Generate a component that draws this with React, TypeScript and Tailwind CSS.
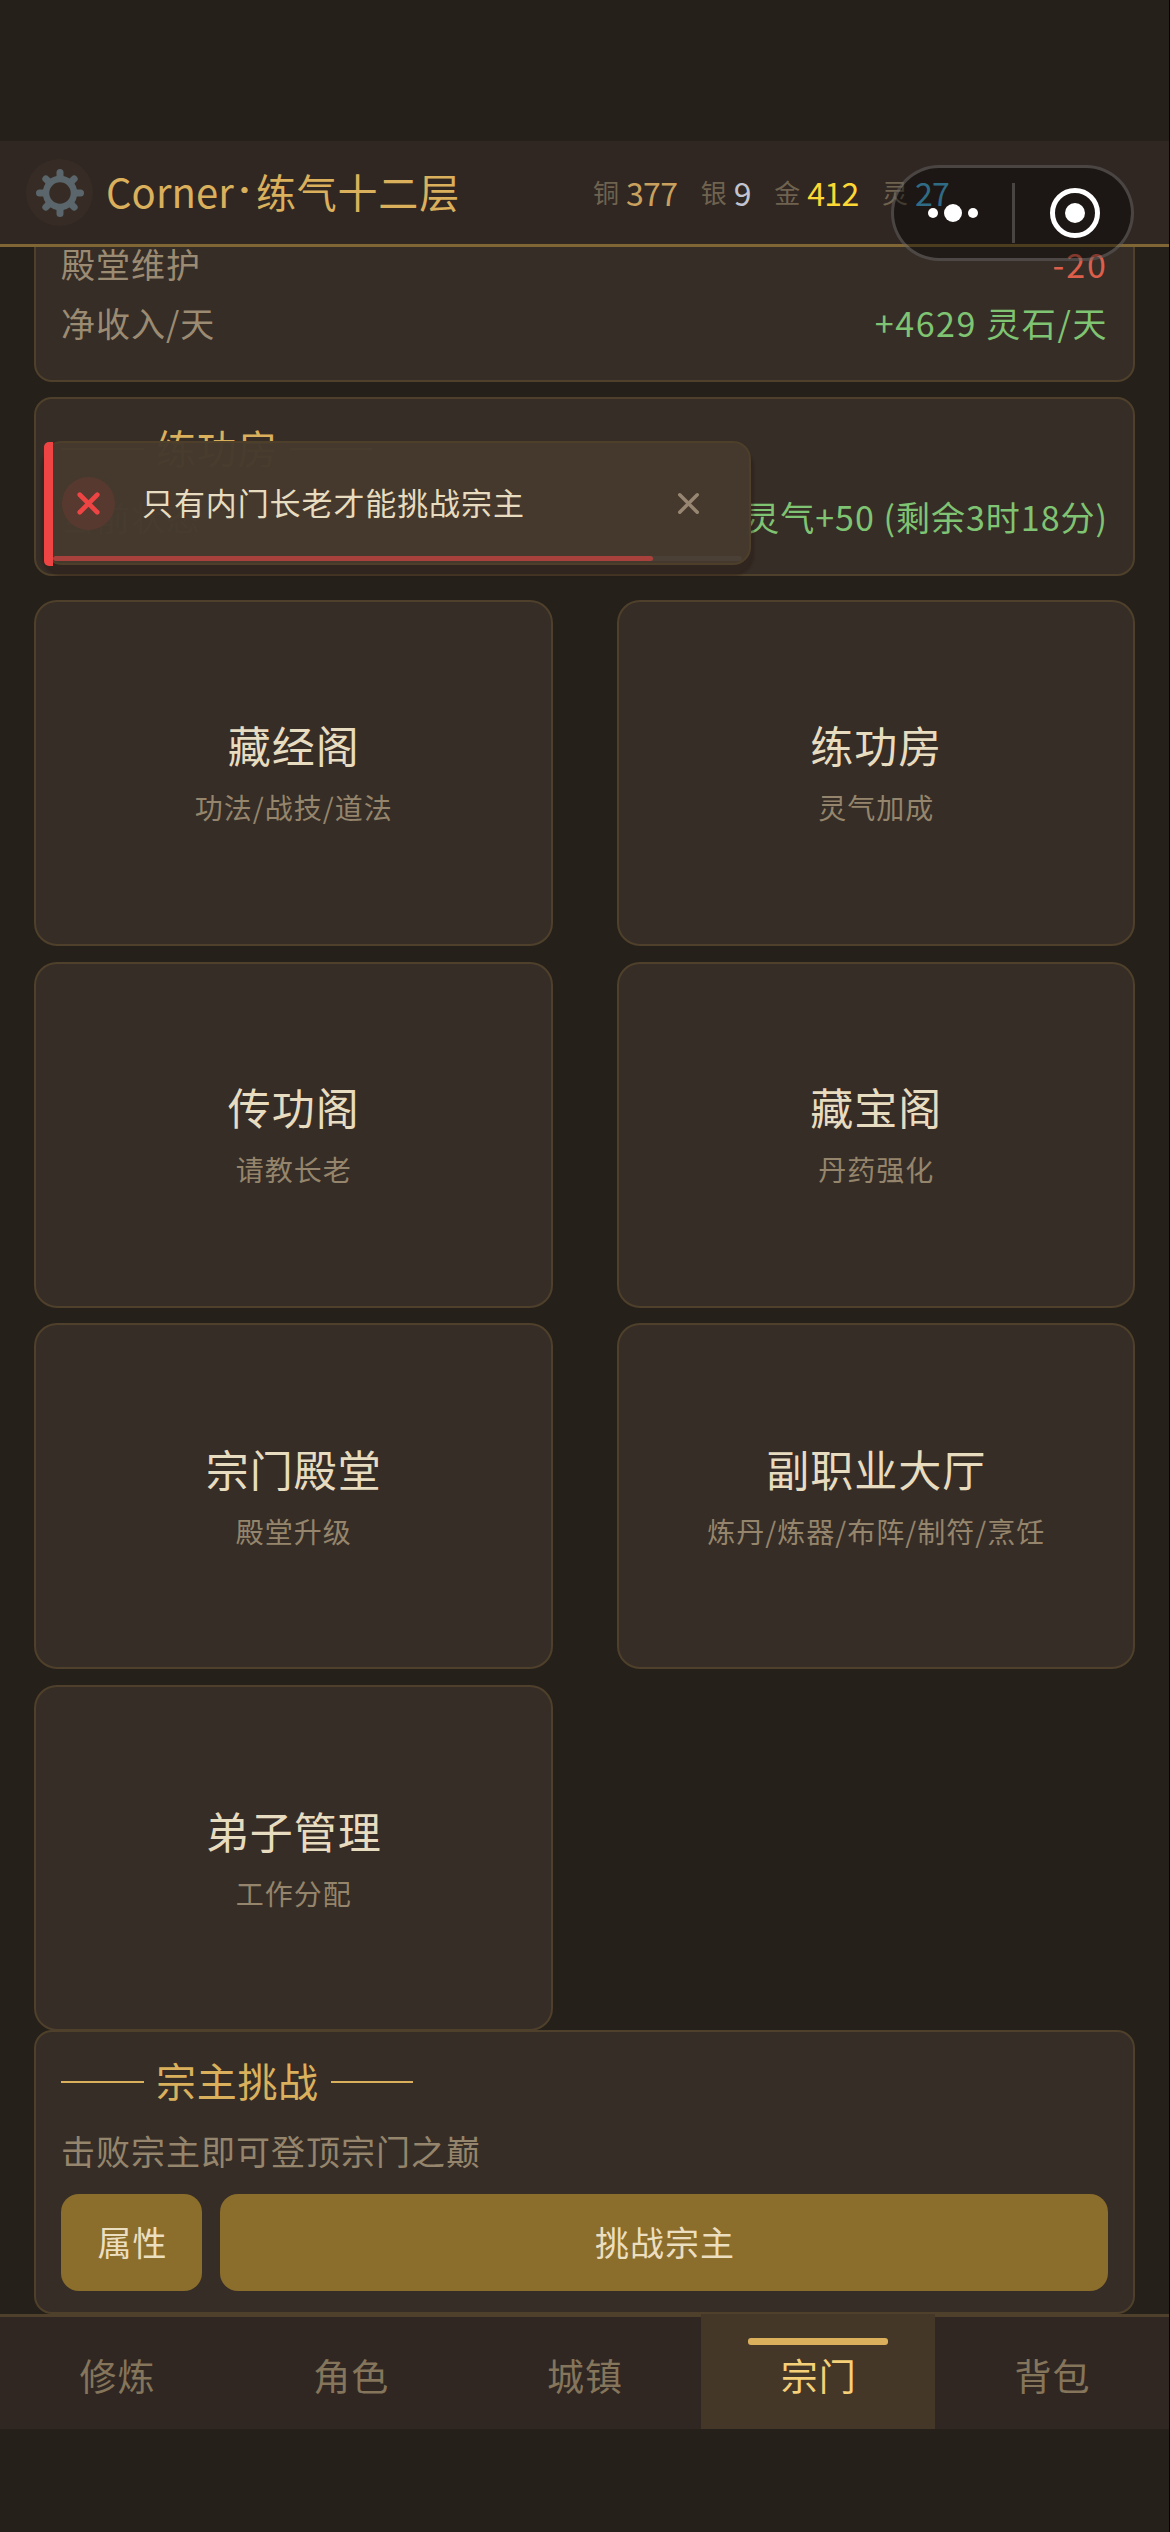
import { useState } from "react";
import { X } from "lucide-react";

const currencies = [
  { label: "铜", value: "377", color: "text-[#c9a15f]" },
  { label: "银", value: "9", color: "text-[#c0c4d0]" },
  { label: "金", value: "412", color: "text-[#fdd835]" },
  { label: "灵", value: "27", color: "text-[#4fb3dc]" },
];

const halls = [
  { name: "藏经阁", desc: "功法/战技/道法" },
  { name: "练功房", desc: "灵气加成" },
  { name: "传功阁", desc: "请教长老" },
  { name: "藏宝阁", desc: "丹药强化" },
  { name: "宗门殿堂", desc: "殿堂升级" },
  { name: "副职业大厅", desc: "炼丹/炼器/布阵/制符/烹饪" },
  { name: "弟子管理", desc: "工作分配" },
];

const tabs = ["修炼", "角色", "城镇", "宗门", "背包"];

function Gear() {
  return (
    <svg width="48" height="48" viewBox="-24 -24 48 48" fill="none" stroke="#5a666b">
      <circle r="14" strokeWidth="6.5" />
      {[0, 45, 90, 135, 180, 225, 270, 315].map((deg) => (
        <line
          key={deg}
          y1="-16"
          y2={deg % 90 === 0 ? "-20.5" : "-20"}
          strokeWidth="7"
          strokeLinecap="round"
          transform={`rotate(${deg})`}
        />
      ))}
    </svg>
  );
}

function Capsule() {
  return (
    <div className="absolute left-[891px] top-[165px] z-20 flex h-[96px] w-[243px] items-center rounded-full border-[3px] border-white/20 bg-black/40">
      <div className="flex w-[118px] items-center justify-center gap-[6px]">
        <span className="size-[10px] rounded-full bg-white" />
        <span className="size-[18px] rounded-full bg-white" />
        <span className="size-[10px] rounded-full bg-white" />
      </div>
      <span className="h-[60px] w-[3px] bg-white/20" />
      <div className="flex flex-1 items-center justify-center pl-[3px]">
        <span className="flex size-[50px] items-center justify-center rounded-full border-[5px] border-white">
          <span className="size-[20px] rounded-full bg-white" />
        </span>
      </div>
    </div>
  );
}

function Toast({ onClose }: { onClose: () => void }) {
  return (
    <div className="absolute left-[44px] top-[441px] z-10 flex h-[124px] w-[707px] items-center rounded-[18px] border-2 border-l-0 border-[#4d3f2a] bg-[#44392d]/[0.98] shadow-[0_8px_2px_3px_rgba(40,24,20,0.35)]">
      <span className="absolute -top-[1px] left-0 h-[124px] w-[9px] rounded-l-[5px] bg-[#ef4444]" />
      <span className="ml-[18px] flex size-[53px] items-center justify-center rounded-full bg-[#573930]">
        <X className="size-[35px] text-[#ef4444]" strokeWidth={3.2} />
      </span>
      <span className="ml-[27px] flex-1 pb-[4px] text-[31px] leading-none tracking-[0.9px] text-[#e8dcc0]">
        只有内门长老才能挑战宗主
      </span>
      <button onClick={onClose} className="mr-[43px]">
        <X className="size-[35px] text-[#978671]" strokeWidth={2.4} />
      </button>
      <span className="absolute bottom-[2px] left-[9px] h-[5px] w-[689px] overflow-hidden rounded-full bg-[#4a4035]">
        <span className="block h-full w-[600px] rounded-full bg-[#a8413c]" />
      </span>
    </div>
  );
}

function Row({ label, value, color }: { label: string; value: string; color: string }) {
  return (
    <div className="flex h-[59px] items-center justify-between pb-[3px] text-[34px] leading-none tracking-[1px]">
      <span className="text-[#9c8b73]">{label}</span>
      <span className={color}>{value}</span>
    </div>
  );
}

function SectionTitle({ children }: { children: string }) {
  return (
    <h2 className="flex h-[60px] items-center gap-[12px] text-[40px] leading-none tracking-[0.7px] text-[#dab05d]">
      <span className="h-[2px] w-[83px] bg-[#dab05d]" />
      <span className="pb-[4px]">{children}</span>
      <span className="h-[2px] w-[82px] bg-[#dab05d]" />
    </h2>
  );
}

export default function App() {
  const [active, setActive] = useState("宗门");
  const [showToast, setShowToast] = useState(true);

  return (
    <div className="relative flex h-[2532px] w-[1170px] flex-col overflow-hidden border-r border-black bg-[#25201a] pt-[141px] pb-[103px] font-['Noto_Sans_CJK_SC',sans-serif]">
      <header className="flex h-[106px] shrink-0 items-center border-b-[3px] border-[#7f6634] bg-[#302722] pl-[26px]">
        <button className="flex size-[67px] items-center justify-center rounded-full bg-[#362c25]">
          <Gear />
        </button>
        <h1 className="ml-[13px] flex w-[487px] items-center pb-[3px] text-[40px] leading-none tracking-[0.8px] text-[#dab05d]">
          <span className="tracking-[0.1px]">Corner</span>
          <span className="w-[22px] text-center font-['Roboto',sans-serif] font-bold">·</span>
          练气十二层
        </h1>
        <div className="flex gap-[23.5px] pb-[2px]">
          {currencies.map((c) => (
            <span key={c.label} className="flex items-center leading-none">
              <span className="text-[26px] text-[#6f6350]">{c.label}</span>
              <span className={`ml-[7px] text-[32px] tracking-[-0.7px] ${c.color}`}>{c.value}</span>
            </span>
          ))}
        </div>
      </header>

      {/* the list is scrolled to its end, so it hangs from the bottom edge */}
      <main className="flex min-h-0 flex-1 flex-col justify-end overflow-hidden px-[34px]">
        <section className="h-[170px] shrink-0 rounded-[18px] border-2 border-[#4f402b] bg-[#362d26] px-[25px] pt-[22px]">
          <Row label="殿堂维护" value="-20" color="tracking-[2px] text-[#dd5f4b]" />
          <Row label="净收入/天" value="+4629 灵石/天" color="tracking-[1.6px] text-[#7fc473]" />
        </section>

        <section className="mt-[15px] h-[179px] shrink-0 rounded-[18px] border-2 border-[#4f402b] bg-[#362d26] px-[25px] pt-[20px]">
          <SectionTitle>练功房</SectionTitle>
          <div className="mt-[10px]">
            <Row label="当前状态" value="灵气+50 (剩余3时18分)" color="tracking-[1px] text-[#7fc473]" />
          </div>
        </section>

        <div className="mt-[24px] grid shrink-0 grid-cols-2 gap-x-[64px] gap-y-[15.7px]">
          {halls.map((h) => (
            <button
              key={h.name}
              className="flex h-[346px] flex-col items-center justify-center rounded-[23px] border-2 border-[#4f402b] bg-[#362d26] pb-[4px] pl-[1px]"
            >
              <span className="text-[43px] leading-[64px] tracking-[1px] text-[#e8dcc0]">{h.name}</span>
              <span className="mt-[9px] text-[28px] leading-[44px] tracking-[1px] text-[#95856c]">
                {h.desc}
              </span>
            </button>
          ))}
        </div>

        <section className="-mt-px h-[284px] shrink-0 rounded-[18px] border-2 border-[#4f402b] bg-[#362d26] px-[25px] pt-[20px]">
          <SectionTitle>宗主挑战</SectionTitle>
          <p className="mt-[9px] h-[59px] text-[34px] leading-[59px] tracking-[1px] text-[#95856c]">
            击败宗主即可登顶宗门之巅
          </p>
          <div className="mt-[14px] flex gap-[18px] text-[34px] tracking-[1px] text-[#ecdfc0]">
            <button className="h-[97px] w-[141px] rounded-[18px] bg-[#8b6d2c] pb-[3px] pl-[2px]">属性</button>
            <button className="h-[97px] flex-1 rounded-[18px] bg-[#8b6d2c] pb-[3px] pl-[2px]">挑战宗主</button>
          </div>
        </section>
      </main>

      <nav className="flex h-[115px] shrink-0 bg-[#302722]">
        {tabs.map((t) => (
          <button
            key={t}
            onClick={() => setActive(t)}
            className={`relative flex flex-1 items-center justify-center border-t-[3px] pt-[4px] pl-[1px] text-[37px] leading-none tracking-[1px] ${
              t === active ? "border-[#443728] bg-[#443728] text-[#f5d078]" : "border-[#4f402b] text-[#84755b]"
            }`}
          >
            {t === active && (
              <span className="absolute left-[47px] top-[21px] h-[7px] w-[140px] rounded-[3px] bg-[#dab05d]" />
            )}
            {t}
          </button>
        ))}
      </nav>

      <Capsule />
      {showToast && <Toast onClose={() => setShowToast(false)} />}
    </div>
  );
}
